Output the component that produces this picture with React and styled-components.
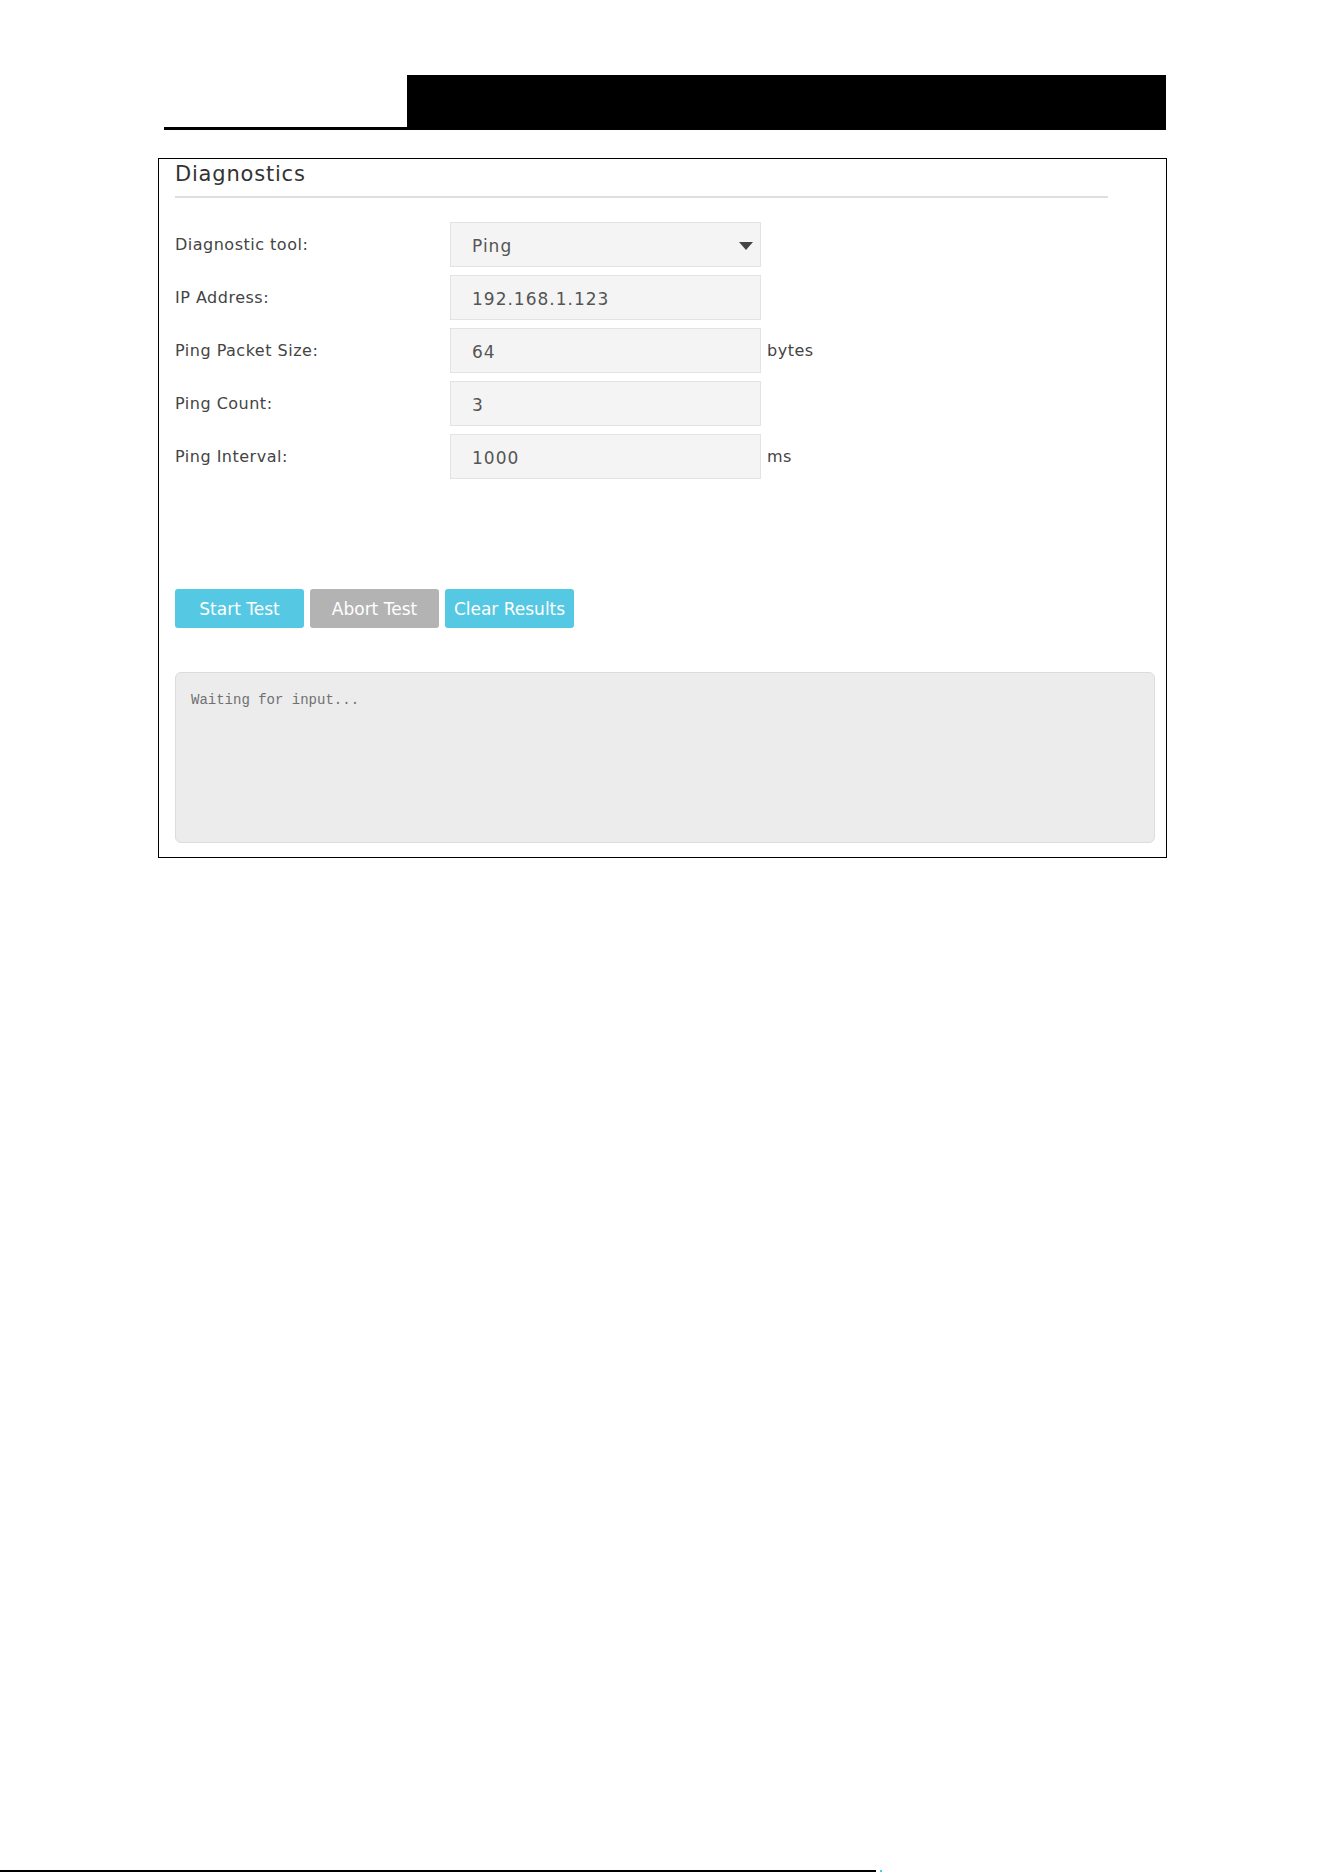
import React from "react"
import styled, { createGlobalStyle } from "styled-components"

const GlobalStyle = createGlobalStyle`
  body {
    margin: 0;
    background: #fff;
    font-family: "DejaVu Sans", Verdana, sans-serif;
  }
`

const fields = [
  { label: "Diagnostic tool:", value: "Ping", select: true },
  { label: "IP Address:", value: "192.168.1.123" },
  { label: "Ping Packet Size:", value: "64", unit: "bytes" },
  { label: "Ping Count:", value: "3" },
  { label: "Ping Interval:", value: "1000", unit: "ms" },
]

const App = () => {
  return (
    <Page>
      <GlobalStyle />
      <Header>
        <HeaderLeft />
        <HeaderRight />
      </Header>

      <Panel>
        <Title>Diagnostics</Title>
        <Divider />

        <Form>
          {fields.map((f) => (
            <Row key={f.label}>
              <Label>{f.label}</Label>
              <Field>
                <span>{f.value}</span>
                {f.select && (
                  <svg width="14" height="8" viewBox="0 0 14 8">
                    <path d="M0 0 H14 L7 8 Z" fill="#444" />
                  </svg>
                )}
              </Field>
              {f.unit && <Unit>{f.unit}</Unit>}
            </Row>
          ))}
        </Form>

        <Buttons>
          <Button $bg="#55c8e3">Start Test</Button>
          <Button $bg="#b3b3b3">Abort Test</Button>
          <Button $bg="#55c8e3">Clear Results</Button>
        </Buttons>

        <Output>Waiting for input...</Output>
      </Panel>

      <Footer>
        <FooterLine />
        <FooterDot />
      </Footer>
    </Page>
  )
}

const Page = styled.div`
  display: flex;
  flex-direction: column;
  min-height: 1872px;
  padding-top: 75px;
  box-sizing: border-box;
`

const Header = styled.div`
  display: flex;
  margin-left: 164px;
  width: 1002px;
  height: 55px;
`

const HeaderLeft = styled.div`
  width: 243px;
  border-bottom: 3px solid #000;
  box-sizing: border-box;
`

const HeaderRight = styled.div`
  flex: 1;
  background: #000;
`

const Panel = styled.div`
  margin: 28px 0 0 158px;
  width: 1009px;
  border: 1px solid #000;
  box-sizing: border-box;
  padding: 2px 11px 14px 16px;
`

const Title = styled.div`
  font-size: 21px;
  line-height: 26px;
  letter-spacing: 0.8px;
  color: #333;
`

const Divider = styled.div`
  margin: 9px 47px 0 0;
  height: 2px;
  background: #dedede;
`

const Form = styled.div`
  display: flex;
  flex-direction: column;
  gap: 8px;
  margin-top: 24px;
`

const Row = styled.div`
  display: flex;
  align-items: center;
  height: 45px;
`

const Label = styled.div`
  width: 275px;
  font-size: 16px;
  letter-spacing: 0.5px;
  color: #444;
  margin-top: -1px;
`

const Field = styled.div`
  width: 311px;
  height: 45px;
  box-sizing: border-box;
  display: flex;
  align-items: center;
  justify-content: space-between;
  padding: 2px 7px 0 21px;
  background: #f4f4f4;
  border: 1px solid #e3e3e3;
  font-size: 17px;
  letter-spacing: 1px;
  color: #555;
`

const Unit = styled.div`
  margin-left: 6px;
  font-size: 16px;
  letter-spacing: 0.5px;
  color: #444;
`

const Buttons = styled.div`
  display: flex;
  gap: 6px;
  margin-top: 110px;
`

const Button = styled.button`
  width: 129px;
  height: 39px;
  border: none;
  border-radius: 3px;
  background: ${(p) => p.$bg};
  color: #fff;
  font-family: "DejaVu Sans", Verdana, sans-serif;
  font-size: 17px;
  padding: 0;
`

const Output = styled.div`
  margin-top: 44px;
  height: 171px;
  box-sizing: border-box;
  padding: 19px 15px;
  background: #ececec;
  border: 1px solid #dcdcdc;
  border-radius: 6px;
  font-family: "Liberation Mono", "Courier New", monospace;
  font-size: 14px;
  color: #707070;
`

const Footer = styled.div`
  display: flex;
  align-items: flex-end;
  margin-top: auto;
  height: 2px;
`

const FooterLine = styled.div`
  width: 876px;
  height: 2px;
  background: #000;
`

const FooterDot = styled.div`
  width: 2px;
  height: 2px;
  margin-left: 4px;
  background: #4fc8e0;
`

export default App
